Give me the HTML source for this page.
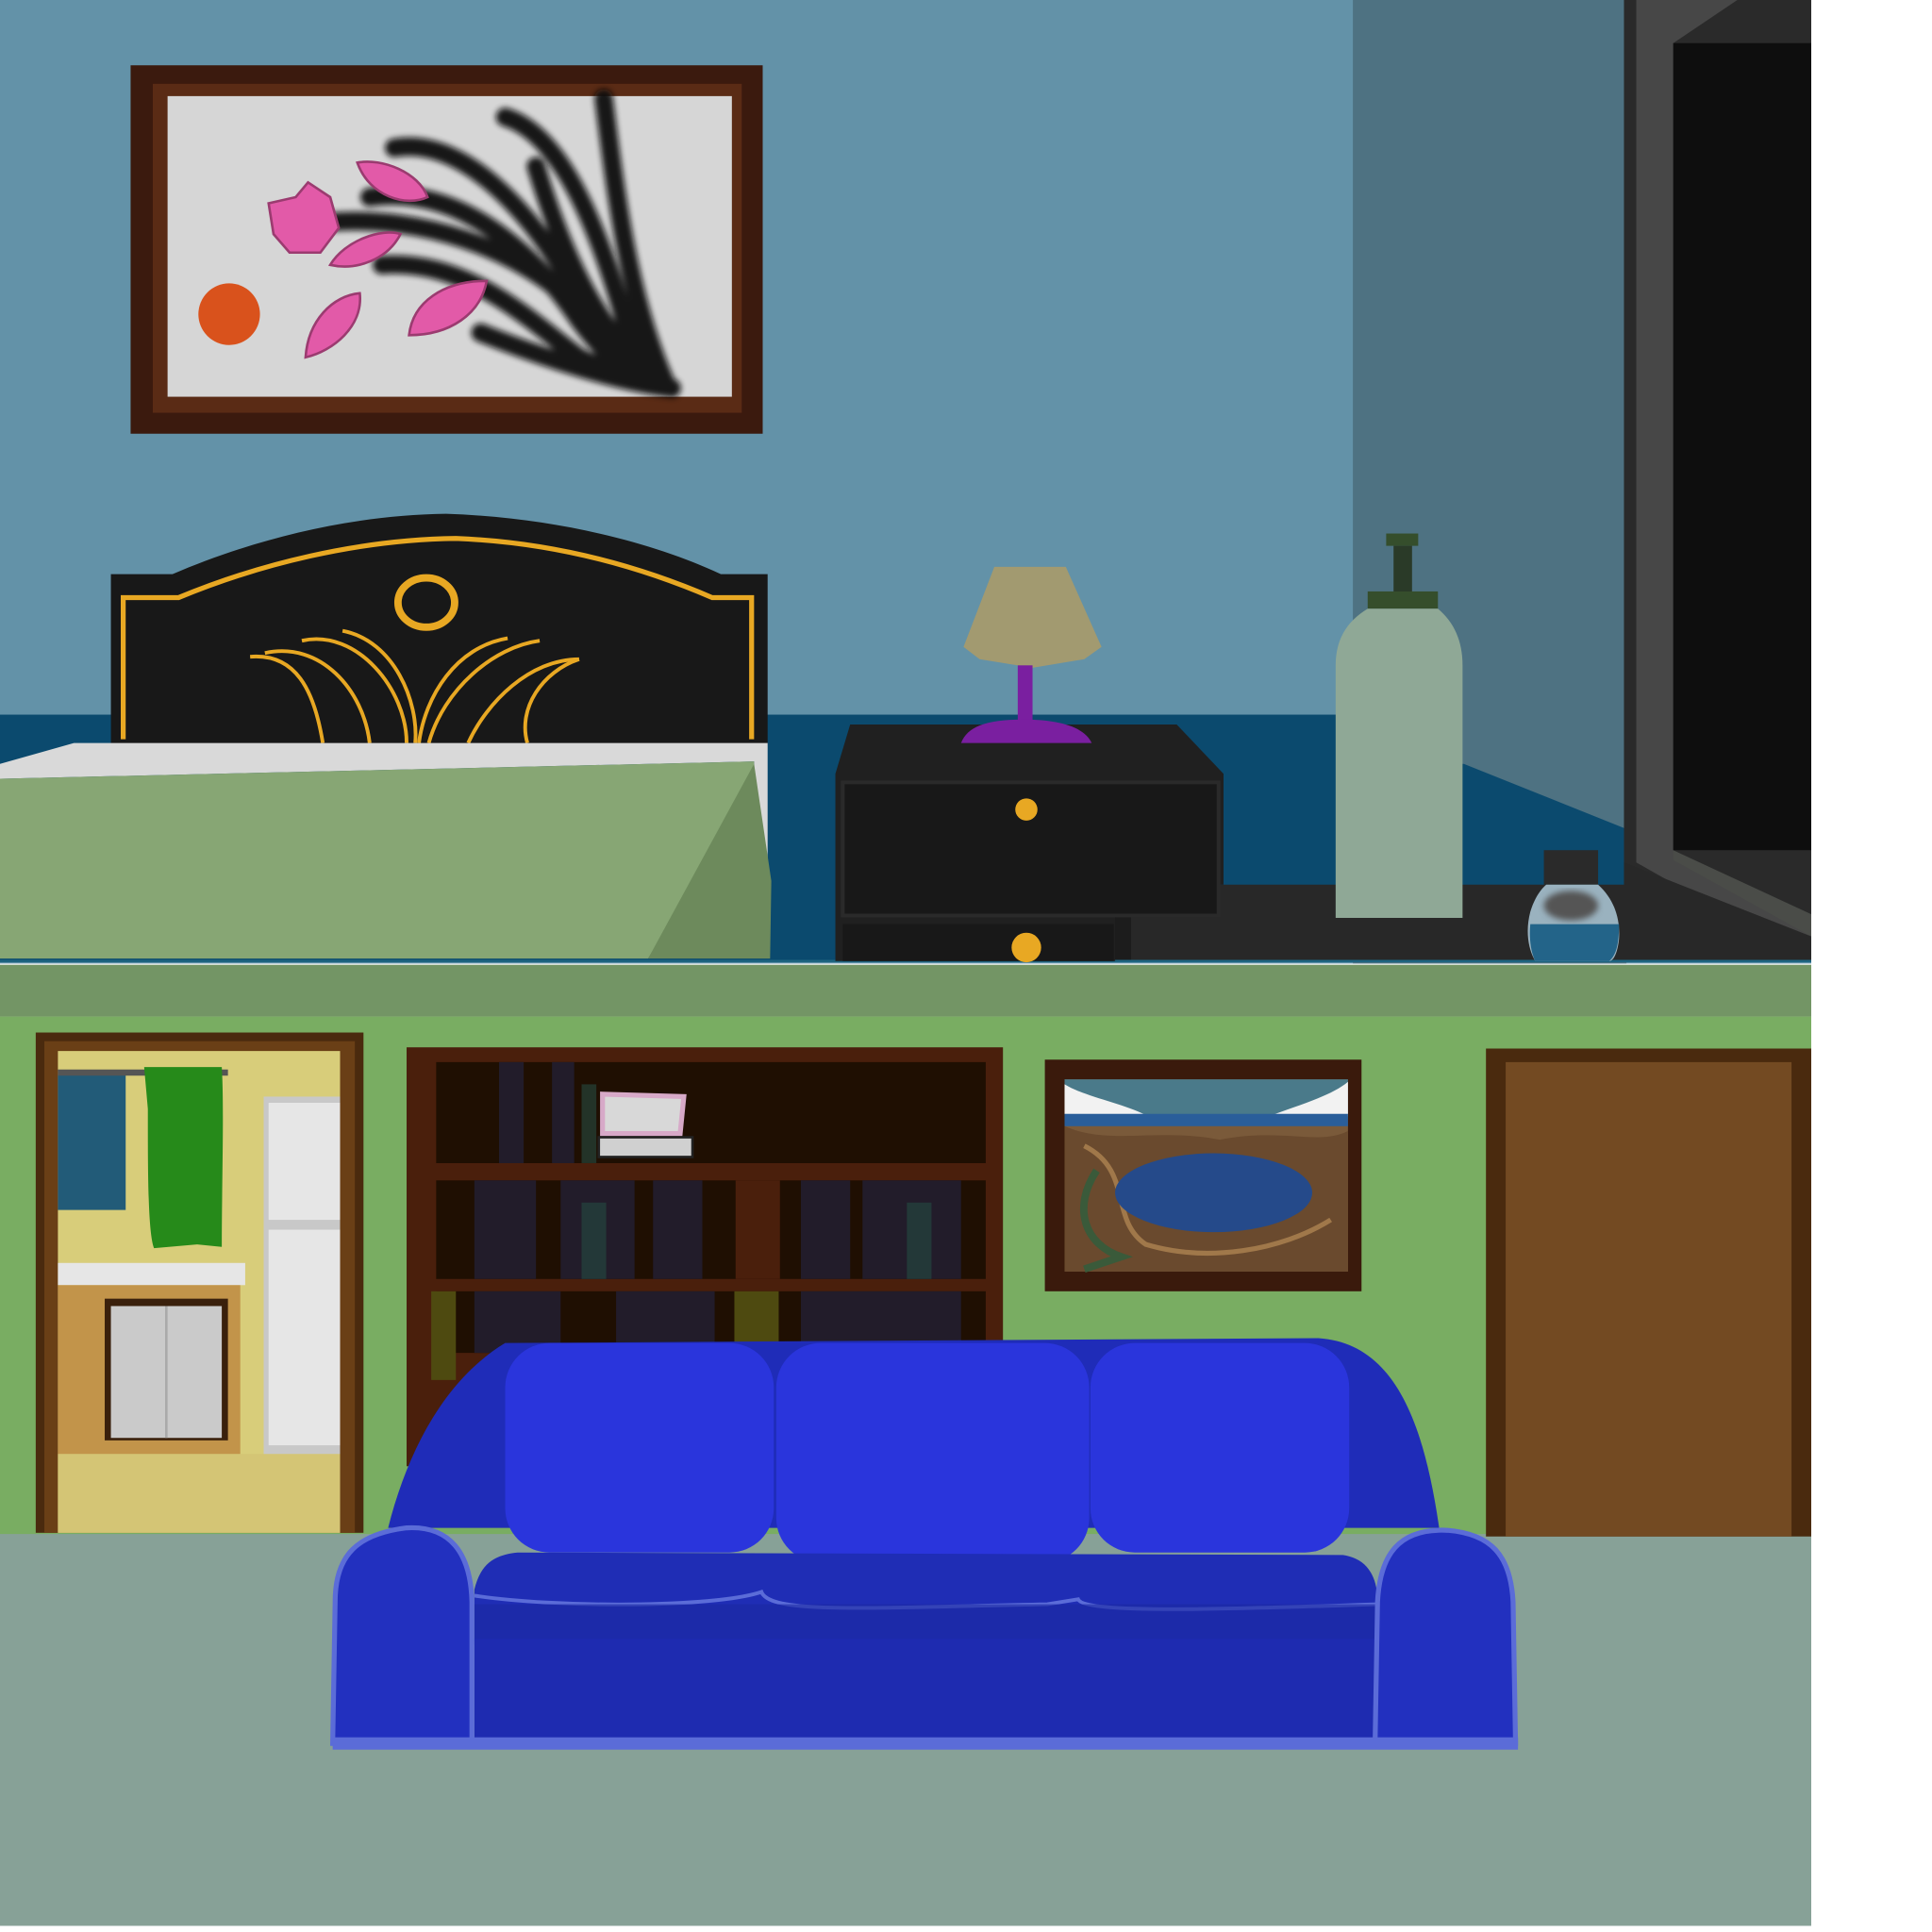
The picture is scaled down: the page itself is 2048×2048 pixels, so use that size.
<!DOCTYPE html>
<html><head><meta charset="utf-8"><style>html,body{margin:0;padding:0;background:#fff}svg{display:block}</style></head>
<body>
<svg width="2048" height="2048" viewBox="0 0 1568 1568" xmlns="http://www.w3.org/2000/svg">
<defs><filter id="bl" x="-10%" y="-10%" width="120%" height="120%"><feGaussianBlur stdDeviation="2.5"/></filter></defs>
<rect width="1568" height="1568" fill="#fff"/>
<!-- TOP ROOM -->
<rect x="0" y="0" width="1470" height="782" fill="#6392a8"/>
<rect x="1098" y="0" width="222" height="782" fill="#4e7282"/>
<rect x="0" y="580" width="1098" height="200" fill="#0b4a6e"/>
<polygon points="1098,620 1188,620 1318,672 1318,780 1098,780" fill="#0b4a6e"/>
<!-- door -->
<rect x="1318" y="0" width="152" height="780" fill="#2a2a2a"/>
<polygon points="1328,0 1410,0 1358,35 1358,690 1470,760 1470,780 1328,700" fill="#474747"/>
<rect x="1358" y="35" width="112" height="655" fill="#0e0e0e"/>
<polygon points="1358,690 1470,742 1470,760 1358,698" fill="#4a4c48"/>
<!-- floor dark -->
<polygon points="905,718 1318,718 1318,700 1470,760 1470,780 905,780" fill="#282828"/>
<polygon points="905,718 918,718 918,780 905,780" fill="#1c1c1c"/>
<line x1="0" y1="780" x2="1470" y2="780" stroke="#1d6480" stroke-width="2"/>
<!-- painting -->
<rect x="106" y="53" width="513" height="299" fill="#3b1a0e"/>
<rect x="124" y="68" width="478" height="267" fill="#5a2b15"/>
<rect x="136" y="78" width="458" height="244" fill="#d6d6d6"/>
<g stroke="#111" stroke-width="15" fill="none" stroke-linecap="round" opacity="0.95" filter="url(#bl)">
<path d="M270,180 C340,175 420,200 470,250 C500,280 520,305 545,315"/>
<path d="M300,160 C370,150 430,200 470,260 C500,300 520,310 545,315"/>
<path d="M320,120 C380,110 440,180 480,260 C505,300 525,310 545,315"/>
<path d="M410,95 C460,110 490,200 510,270 C520,300 535,312 545,315"/>
<path d="M490,80 C500,160 510,240 540,310"/>
<path d="M435,135 C455,200 480,260 530,310"/>
<path d="M310,215 C380,210 430,260 470,290 C500,305 530,312 545,315"/>
<path d="M390,270 C440,290 500,310 545,315"/>
</g>
<g fill="#e25aa8" stroke="#9b3b70" stroke-width="2">
<path d="M218,165 L240,160 L250,148 L268,160 L275,185 L260,205 L235,205 L222,190 Z"/>
<path d="M290,132 C310,128 340,140 347,160 C330,168 300,160 290,132 Z"/>
<path d="M268,215 C280,195 310,185 325,190 C315,210 290,220 268,215 Z"/>
<path d="M248,290 C250,260 270,240 292,238 C295,265 270,285 248,290 Z"/>
<path d="M332,272 C335,245 360,228 395,228 C390,255 365,272 332,272 Z"/>
</g>
<circle cx="186" cy="255" r="25" fill="#d9521c"/>
<!-- bed -->
<path d="M90,466 L140,466 C200,440 280,418 362,417 C450,420 530,440 585,466 L623,466 L623,605 L90,605 Z" fill="#181818"/>
<path d="M100,600 L100,485 L145,485 C210,458 290,438 370,437 C450,440 520,460 578,485 L610,485 L610,600" fill="none" stroke="#e8a823" stroke-width="4"/>
<ellipse cx="346" cy="489" rx="23" ry="20" fill="none" stroke="#e8a823" stroke-width="6"/>
<g fill="none" stroke="#e8a823" stroke-width="3">
<path d="M203,533 C240,530 255,560 262,603"/>
<path d="M215,530 C260,520 295,560 300,603"/>
<path d="M245,520 C290,510 330,560 330,603"/>
<path d="M278,512 C320,520 340,570 337,603"/>
<path d="M470,535 C430,535 395,570 380,603"/>
<path d="M438,520 C400,525 360,560 348,603"/>
<path d="M412,518 C370,525 345,565 340,603"/>
<path d="M470,535 C440,545 420,575 428,603"/>
</g>
<polygon points="60,603 623,603 623,712 612,712 612,618 0,632 0,620" fill="#d9d9d9"/>
<polygon points="0,632 612,618 612,632 526,778 0,778" fill="#87a674"/>
<polygon points="612,620 626,715 625,778 526,778" fill="#6d8a5c"/>
<!-- nightstand -->
<polygon points="690,588 955,588 993,628 993,718 905,718 905,780 678,780 678,628" fill="#202020"/>
<rect x="684" y="635" width="305" height="108" fill="#181818" stroke="#2a2a2a" stroke-width="3"/>
<rect x="684" y="750" width="220" height="30" fill="#181818"/>
<circle cx="833" cy="657" r="9" fill="#e8a823"/>
<circle cx="833" cy="769" r="12" fill="#e8a823"/>
<!-- lamp -->
<polygon points="807,460 865,460 894,525 880,535 838,542 795,535 782,525" fill="#a29a70"/>
<rect x="826" y="540" width="12" height="48" fill="#7a1fa0"/>
<path d="M780,603 C785,590 800,584 830,584 C860,584 880,590 886,603 Z" fill="#7a1fa0"/>
<!-- bottle -->
<rect x="1125" y="433" width="26" height="10" fill="#354e2c"/>
<rect x="1131" y="443" width="15" height="38" fill="#2a3a28"/>
<rect x="1110" y="480" width="57" height="14" fill="#354e2c"/>
<path d="M1110,494 L1167,494 C1180,505 1187,520 1187,540 L1187,745 L1084,745 L1084,540 C1084,520 1092,505 1110,494 Z" fill="#8fa896"/>
<!-- jar -->
<rect x="1253" y="690" width="44" height="28" fill="#2a2a2a"/>
<path d="M1255,718 L1297,718 C1310,730 1315,745 1314,762 C1313,772 1310,780 1306,780 L1246,780 C1240,770 1238,755 1242,740 C1245,730 1250,722 1255,718 Z" fill="#9ab2bf"/>
<path d="M1242,750 L1314,750 C1314,765 1312,775 1306,780 L1246,780 C1242,772 1241,760 1242,750 Z" fill="#236489"/>
<ellipse cx="1275" cy="735" rx="22" ry="12" fill="#555" filter="url(#bl)"/>
<!-- BOTTOM ROOM -->
<rect x="0" y="783" width="1470" height="42" fill="#739565"/>
<rect x="0" y="825" width="1470" height="422" fill="#79ad62"/>
<rect x="0" y="1245" width="1470" height="318" fill="#87a197"/>
<!-- left doorway -->
<rect x="29" y="838" width="266" height="406" fill="#4a2a0e"/>
<rect x="36" y="845" width="252" height="399" fill="#6a3f16"/>
<rect x="47" y="853" width="229" height="391" fill="#d8cd7a"/>
<rect x="47" y="1180" width="229" height="64" fill="#d4c575"/>
<rect x="47" y="872" width="55" height="110" fill="#225b78"/>
<rect x="47" y="868" width="138" height="5" fill="#555"/>
<path d="M117,866 L180,866 C182,900 180,960 180,1012 L160,1010 L125,1013 C120,1000 120,950 120,900 Z" fill="#268a1a"/>
<rect x="47" y="1025" width="152" height="18" fill="#e6e6e6"/>
<rect x="47" y="1043" width="148" height="137" fill="#c2944a"/>
<rect x="85" y="1054" width="100" height="115" fill="#3a200c"/>
<rect x="90" y="1060" width="90" height="107" fill="#cacaca"/>
<line x1="135" y1="1060" x2="135" y2="1167" stroke="#aaa" stroke-width="2"/>
<rect x="214" y="890" width="62" height="290" fill="#c8c8c8"/>
<rect x="218" y="895" width="58" height="95" fill="#e6e6e6"/>
<rect x="218" y="998" width="58" height="175" fill="#e6e6e6"/>
<!-- bookshelf -->
<rect x="330" y="850" width="484" height="340" fill="#4a1f0c"/>
<rect x="354" y="862" width="446" height="82" fill="#1f0f02"/>
<rect x="354" y="958" width="446" height="80" fill="#1f0f02"/>
<rect x="354" y="1048" width="446" height="50" fill="#1f0f02"/>
<g fill="#221c2a">
<rect x="405" y="862" width="20" height="82"/><rect x="448" y="862" width="18" height="82"/>
<rect x="385" y="958" width="50" height="80"/><rect x="455" y="958" width="60" height="80"/><rect x="530" y="958" width="40" height="80"/>
<rect x="650" y="958" width="40" height="80"/><rect x="700" y="958" width="80" height="80"/>
<rect x="385" y="1048" width="70" height="50"/><rect x="500" y="1048" width="80" height="50"/><rect x="650" y="1048" width="130" height="50"/>
</g>
<rect x="597" y="958" width="36" height="80" fill="#4a1f0c"/>
<rect x="472" y="976" width="20" height="62" fill="#233838"/>
<rect x="736" y="976" width="20" height="62" fill="#233838"/>
<rect x="472" y="880" width="12" height="64" fill="#233328"/>
<rect x="350" y="1048" width="20" height="72" fill="#4e4a10"/>
<rect x="596" y="1048" width="36" height="50" fill="#4e4a10"/>
<path d="M489,888 L555,890 L552,920 L489,920 Z" fill="#d8d8d8" stroke="#d7a9c8" stroke-width="4"/>
<rect x="486" y="923" width="76" height="16" fill="#d0d0d0" stroke="#222" stroke-width="2"/>
<!-- landscape -->
<rect x="848" y="860" width="257" height="188" fill="#3a1a0c"/>
<rect x="864" y="876" width="230" height="156" fill="#7a5a3a"/>
<rect x="864" y="876" width="230" height="32" fill="#4a7a8a"/>
<path d="M864,880 C880,890 910,895 930,905 L864,905 Z" fill="#f2f2f2"/>
<path d="M1094,878 C1080,890 1050,898 1030,906 L1094,906 Z" fill="#f2f2f2"/>
<rect x="864" y="904" width="230" height="10" fill="#2a5e9a"/>
<path d="M864,914 C900,930 940,915 990,925 C1040,915 1070,930 1094,918 L1094,1032 L864,1032 Z" fill="#6a4a2e"/>
<path d="M880,930 C920,950 900,990 930,1010 C980,1025 1040,1015 1080,990" fill="none" stroke="#a0784a" stroke-width="4"/>
<ellipse cx="985" cy="968" rx="80" ry="32" fill="#254a8a"/>
<path d="M890,950 C870,980 880,1010 910,1020 L880,1030" fill="none" stroke="#3a5a3a" stroke-width="6"/>
<!-- right door -->
<rect x="1206" y="851" width="264" height="396" fill="#4a2a0e"/>
<rect x="1222" y="862" width="232" height="385" fill="#734a22"/>
<!-- SOFA -->
<path d="M315,1240 C330,1180 360,1120 410,1090 L1070,1086 C1130,1090 1155,1150 1168,1240 Z" fill="#1f2cb8"/>
<rect x="410" y="1090" width="218" height="170" rx="36" fill="#2a35dc"/>
<rect x="630" y="1090" width="254" height="178" rx="36" fill="#2a35dc"/>
<rect x="885" y="1090" width="210" height="170" rx="36" fill="#2a35dc"/>
<path d="M385,1290 C390,1270 400,1262 420,1260 L1090,1262 C1110,1265 1118,1280 1118,1300 L1118,1335 L385,1335 Z" fill="#1f2db5"/>
<path d="M385,1295 C450,1305 580,1305 618,1292 C625,1310 700,1305 850,1302 L875,1298 C880,1310 1000,1306 1118,1302" fill="none" stroke="#5b6cd8" stroke-width="3"/>
<rect x="385" y="1302" width="735" height="30" fill="#1b28a2" opacity="0.6"/>
<rect x="385" y="1330" width="735" height="85" fill="#1e2bb0"/>
<path d="M270,1415 L272,1300 C272,1262 290,1245 330,1240 C365,1238 382,1260 383,1300 L383,1415 Z" fill="#2230bf" stroke="#5b6cd8" stroke-width="4"/>
<path d="M1230,1415 L1228,1300 C1226,1262 1210,1245 1175,1242 C1135,1240 1120,1262 1118,1300 L1116,1415 Z" fill="#2230bf" stroke="#5b6cd8" stroke-width="4"/>
<rect x="270" y="1410" width="962" height="10" fill="#5b6cd8"/>
</svg>
</body></html>
